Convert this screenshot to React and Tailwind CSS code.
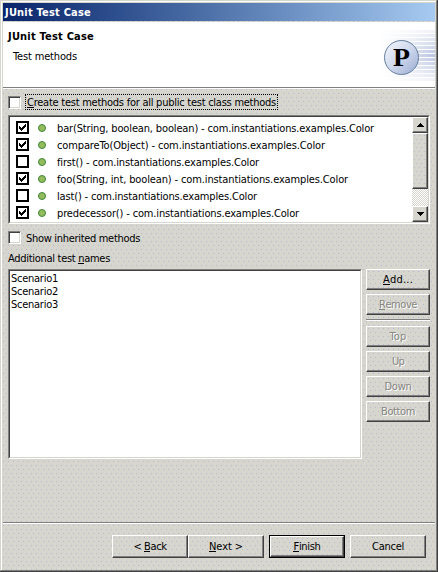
import { useLayoutEffect, useRef } from "react";

// Text run whose tracking is adjusted so it spans a given pixel width.
function T({ w, children, className = "" }) {
  const ref = useRef(null);
  useLayoutEffect(() => {
    const el = ref.current;
    el.style.letterSpacing = "0px";
    const natural = el.getBoundingClientRect().width;
    el.style.letterSpacing = (w - natural) / el.textContent.length + "px";
  }, [w]);
  return (
    <span ref={ref} className={"inline-block shrink-0 whitespace-pre " + className}>
      {children}
    </span>
  );
}

const U = ({ children }) => (
  <span className="border-b border-current inline-block h-[12px] leading-[13px]">{children}</span>
);

const dots =
  "bg-[#d6d5ce] bg-[radial-gradient(circle_at_1.5px_1.5px,#b4b9d4_0.5px,transparent_0.7px),radial-gradient(circle_at_3.5px_5.5px,#b4b9d4_0.5px,transparent_0.7px)] bg-[size:5px_8px]";

const raised =
  "border border-t-white border-l-white border-r-[#404040] border-b-[#404040] shadow-[inset_-1px_-1px_0_#808080]";

function Box({ className = "" }) {
  return (
    <div className={"size-[13px] shrink-0 border border-t-[#808080] border-l-[#808080] border-r-white border-b-white bg-white shadow-[inset_1px_1px_0_#404040,inset_-1px_-1px_0_#d6d5ce] " + className} />
  );
}

function Button({ w, disabled, className = "", children }) {
  return (
    <button
      className={
        "flex items-center justify-center " + dots + " " + raised + " " +
        (disabled ? "text-[#85857f] [text-shadow:1px_1px_0_#fff] " : "text-black ") + className
      }
    >
      <T w={w}>{children}</T>
    </button>
  );
}

const methods = [
  [true, "bar(String, boolean, boolean) - com.instantiations.examples.Color", 317],
  [true, "compareTo(Object) - com.instantiations.examples.Color", 268],
  [false, "first() - com.instantiations.examples.Color", 202],
  [true, "foo(String, int, boolean) - com.instantiations.examples.Color", 291],
  [false, "last() - com.instantiations.examples.Color", 200],
  [true, "predecessor() - com.instantiations.examples.Color", 242],
];

function Arrow({ down }) {
  return (
    <div className={"flex h-4 w-4 shrink-0 items-center justify-center bg-[#d6d5ce] " + raised}>
      <svg width="7" height="4" shapeRendering="crispEdges">
        <path d={down ? "M0 0H7V1H6V2H5V3H4V4H3V3H2V2H1V1H0Z" : "M0 4H7V3H6V2H5V1H4V0H3V1H2V2H1V3H0Z"} />
      </svg>
    </div>
  );
}

function Logo() {
  return (
    <svg width="54" height="60" className="mt-[4px]">
      <defs>
        <linearGradient id="fade" gradientUnits="userSpaceOnUse" x1="0" y1="0" x2="54" y2="0">
          <stop offset="0" stopColor="#c3cde6" stopOpacity="0" />
          <stop offset="1" stopColor="#b9c4e1" />
        </linearGradient>
        <linearGradient id="ball" x1="0" y1="0" x2="1" y2="1">
          <stop offset="0" stopColor="#f7f9fe" />
          <stop offset="0.5" stopColor="#cfd8ec" />
          <stop offset="1" stopColor="#9aabd2" />
        </linearGradient>
      </defs>
      {Array.from({ length: 13 }, (_, i) => (
        <rect key={i} x="0" y={4 + i * 4} width="54" height="3" fill="url(#fade)" opacity={1 - Math.abs(i - 6) * 0.13} />
      ))}
      <circle cx="20.5" cy="31.5" r="17" fill="url(#ball)" stroke="#65809f" />
      <text x="12" y="40" textLength="17" lengthAdjust="spacingAndGlyphs" fontFamily="Liberation Serif, serif" fontWeight="bold" fontSize="26">P</text>
    </svg>
  );
}

export default function App() {
  return (
    <div className={"flex h-[572px] w-[438px] flex-col overflow-hidden border-r border-b border-[#404040] font-['DejaVu_Sans_Condensed','DejaVu_Sans',sans-serif] text-[11px] leading-[13px] text-black " + dots}>
      <div className="flex h-[571px] w-[437px] flex-col border-t border-l border-r border-b border-t-[#d6d5ce] border-l-[#d6d5ce] border-r-[#808080] border-b-[#808080]">
        <div className="flex flex-1 flex-col border-t border-l border-white pt-px pl-px pr-px">
          <div className="flex h-[18px] shrink-0 items-center bg-linear-to-r from-[#0a246a] to-[#a6caf0] pl-[2px] text-white">
            <T w={86} className="font-bold">JUnit Test Case</T>
          </div>
          <div className="mt-px flex h-[65px] shrink-0 justify-between bg-white">
            <div className="flex flex-col pt-[8px] pl-[5px]">
              <T w={86} className="self-start font-bold">JUnit Test Case</T>
              <T w={64} className="mt-[7px] ml-[5px] self-start">Test methods</T>
            </div>
            <Logo />
          </div>
          <div className="h-[2px] shrink-0 border-t border-[#808080] bg-white" />

          <div className="flex h-[433px] shrink-0 flex-col pt-[5px] pr-[5px] pl-[5px]">
            <div className="flex h-4 items-center">
              <Box />
              <div className="ml-1 flex h-4 items-center border border-dotted border-black px-px">
                <T w={249}><U>C</U>reate test methods for all public test class methods</T>
              </div>
            </div>

            <div className="mt-[5px] flex h-[109px] shrink-0 border border-t-[#808080] border-l-[#808080] border-r-white border-b-white bg-white">
              <div className="flex flex-1 border border-t-[#404040] border-l-[#404040] border-r-[#d6d5ce] border-b-[#d6d5ce]">
                <div className="flex flex-1 flex-col pt-[2px] pl-[6px]">
                  {methods.map(([on, label, w]) => (
                    <div key={label} className="flex h-[17px] shrink-0 items-center">
                      <div className="size-[13px] border-2 border-black">
                        {on && (
                          <svg width="9" height="9" shapeRendering="crispEdges">
                            <path d="M1 3H2V4H3V5H4V4H5V3H6V2H7V1H8V4H7V5H6V6H5V7H4V8H3V7H2V6H1Z" />
                          </svg>
                        )}
                      </div>
                      <div className="ml-[9px] size-[8px] rounded-full border border-[#43843c] bg-[#93bd5c]" />
                      <T w={w} className="ml-[11px] pt-[2px]">{label}</T>
                    </div>
                  ))}
                </div>
                <div className="flex w-4 flex-col bg-[#e9e9e4]">
                  <Arrow />
                  <div className={"h-[56px] w-4 " + dots + " " + raised} />
                  <div className="flex-1 bg-[conic-gradient(#fff_25%,#d6d5ce_0_50%,#fff_0_75%,#d6d5ce_0)] bg-[size:2px_2px]" />
                  <Arrow down />
                </div>
              </div>
            </div>

            <div className="mt-[7px] flex h-[13px] items-center">
              <Box />
              <T w={114} className="ml-[5px] pt-[2px]">Show inherited methods</T>
            </div>
            <T w={102} className="mt-[8px] self-start">Additional test <U>n</U>ames</T>

            <div className="mt-[4px] flex h-[190px] gap-[4px]">
              <div className="w-[354px] border border-t-[#808080] border-l-[#808080] border-r-white border-b-white">
                <div className="flex h-full flex-col border border-t-[#404040] border-l-[#404040] border-r-[#d6d5ce] border-b-[#d6d5ce] bg-white pt-px pl-px">
                  {["Scenario1", "Scenario2", "Scenario3"].map((s) => (
                    <T key={s} w={47} className="self-start">{s}</T>
                  ))}
                </div>
              </div>
              <div className="flex w-16 flex-col gap-[4px]">
                <Button w={30} className="h-[21px]"><U>A</U>dd...</Button>
                <Button w={38} disabled className="h-[21px]"><U>R</U>emove</Button>
                <div className="h-[3px] border-t border-[#808080] shadow-[inset_0_1px_0_#fff]" />
                <Button w={17} disabled className="h-[21px]">Top</Button>
                <Button w={12} disabled className="h-[21px]">Up</Button>
                <Button w={27} disabled className="h-[21px]">Down</Button>
                <Button w={34} disabled className="h-[21px]">Bottom</Button>
              </div>
            </div>
          </div>

          <div className="h-[2px] shrink-0 border-t border-[#808080] bg-white" />
          <div className="mt-[11px] flex pl-[109px]">
            <Button w={33} className="h-[23px] w-[76px]">{"< "}<U>B</U>ack</Button>
            <Button w={34} className="h-[23px] w-[76px]"><U>N</U>ext {">"}</Button>
            <div className="ml-[5px] border border-black">
              <Button w={27} className="h-[21px] w-[74px]"><U>F</U>inish</Button>
            </div>
            <Button w={32} className="ml-[5px] h-[23px] w-[76px]">Cancel</Button>
          </div>
        </div>
      </div>
    </div>
  );
}
